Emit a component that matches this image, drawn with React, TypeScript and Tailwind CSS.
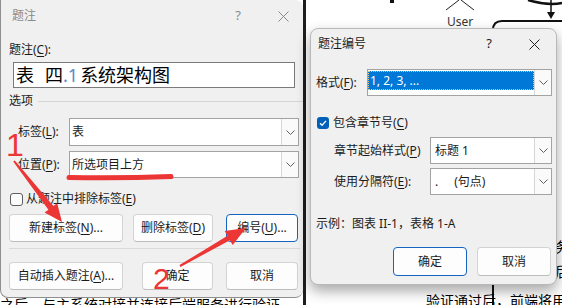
import React from 'react';

const RED = '#ec3535';

function CloseIcon({ color }: { color: string }) {
  return (
    <svg width="11" height="11" viewBox="0 0 11 11">
      <path d="M0.5 0.5 L10.5 10.5 M10.5 0.5 L0.5 10.5" stroke={color} strokeWidth="1" fill="none" />
    </svg>
  );
}

function Chevron() {
  return (
    <svg width="9" height="5" viewBox="0 0 9 5">
      <path d="M0.5 0.5 L4.5 4.5 L8.5 0.5" fill="none" stroke="#606060" strokeWidth="1" />
    </svg>
  );
}

function Combo({ className, children }: { className: string; children: React.ReactNode }) {
  return (
    <div className={`flex border border-[#a3a3a3] bg-white ${className}`}>
      <div className="flex min-w-0 flex-1 items-center">{children}</div>
      <div className="flex w-[17px] items-center justify-center border-l border-[#d6d6d6] bg-[#fafafa]">
        <Chevron />
      </div>
    </div>
  );
}

function Btn({ className, focus, children }: { className: string; focus?: boolean; children: React.ReactNode }) {
  return (
    <div
      className={`flex items-center justify-center rounded-[4px] border bg-[#fdfdfd] ${
        focus ? 'border-[#1565c0]' : 'border-[#d3d3d3] border-b-[#bcbcbc]'
      } ${className}`}
    >
      {children}
    </div>
  );
}

function Key({ k }: { k: string }) {
  return <span className="underline underline-offset-[2px]">{k}</span>;
}

function CaptionDialog() {
  return (
    <div className="absolute left-0 top-0 h-[298px] w-[303px] rounded-b-[8px] rounded-tr-[8px] border-b border-l border-[#8f8f8f] bg-[#f0f0f0]">
      <div className="flex h-[32px] items-center text-[#8a8a8a]">
        <span className="flex-1 pl-[11px]">题注</span>
        <span className="w-[50px] text-center text-[13px]">?</span>
        <span className="flex w-[40px] justify-center">
          <CloseIcon color="#8a8a8a" />
        </span>
      </div>
      <div className="pl-[8px]">
        <div className="mt-[10px] leading-[16px]">
          题注(<Key k="C" />):
        </div>
        <div className="ml-[4px] mt-[4px] flex h-[26px] w-[282px] items-center border border-[#7a7a7a] bg-white pl-[2px] text-[18px] leading-none text-black">
          <span>表</span>
          <span className="ml-[11px]">四</span>
          <span className="text-[#5a8ac6]">.1</span>
          <span className="ml-[2px]">系统架构图</span>
        </div>
        <div className="mt-[5px] flex h-[16px] items-center">
          <span>选项</span>
          <div className="ml-[5px] h-px flex-1 bg-[#d5d5d5]" />
        </div>
        <div className="mt-[9px] flex h-[28px]">
          <div className="flex w-[60px] items-center pl-[9px]">
            标签(<Key k="L" />):
          </div>
          <Combo className="w-[230px]">
            <span className="pl-[2px]">表</span>
          </Combo>
        </div>
        <div className="mt-[5px] flex h-[27px]">
          <div className="flex w-[60px] items-center pl-[9px]">
            位置(<Key k="P" />):
          </div>
          <Combo className="w-[230px]">
            <span className="pl-[2px]">所选项目上方</span>
          </Combo>
        </div>
        <div className="mt-[14px] flex h-[14px] items-center">
          <div className="ml-[1px] h-[13px] w-[13px] rounded-[3px] border border-[#5f5f5f] bg-[#fbfbfb]" />
          <span className="ml-[3px]">
            从题注中排除标签(<Key k="E" />)
          </span>
        </div>
        <div className="mt-[8px] flex h-[28px]">
          <Btn className="w-[114px]">
            新建标签(<Key k="N" />)...
          </Btn>
          <Btn className="ml-[10px] w-[80px]">
            删除标签(<Key k="D" />)
          </Btn>
          <Btn className="ml-[13px] w-[72px]" focus>
            编号(<Key k="U" />)...
          </Btn>
        </div>
        <div className="mt-[6px] h-px w-[291px] bg-[#dadada]" />
        <div className="mt-[13px] flex h-[28px]">
          <Btn className="w-[114px]">
            自动插入题注(<Key k="A" />)...
          </Btn>
          <Btn className="ml-[19px] w-[71px]">确定</Btn>
          <Btn className="ml-[13px] w-[72px]">取消</Btn>
        </div>
      </div>
    </div>
  );
}

function NumberingDialog() {
  return (
    <div className="absolute left-[310px] top-[28px] h-[257px] w-[247px] rounded-[8px] border border-[#b9b9b9] bg-[#f0f0f0] shadow-[0_6px_14px_rgba(0,0,0,0.35)]">
      <div className="flex h-[30px] items-center">
        <span className="flex-1 pl-[7px]">题注编号</span>
        <span className="w-[46px] text-center text-[13px]">?</span>
        <span className="flex w-[44px] justify-center">
          <CloseIcon color="#1f1f1f" />
        </span>
      </div>
      <div className="pl-[5px]">
        <div className="mt-[10px] flex h-[27px]">
          <div className="flex w-[51px] items-center">
            格式(<Key k="F" />):
          </div>
          <Combo className="w-[185px]">
            <div className="mb-auto mt-[1px] flex h-[19px] flex-1 items-center border border-dotted border-[#f3c27a] bg-[#0078d7] pl-[1px] text-white">
              1, 2, 3, ...
            </div>
          </Combo>
        </div>
        <div className="mt-[21px] flex h-[12px] items-center">
          <div className="ml-[1px] flex h-[12px] w-[12px] items-center justify-center rounded-[3px] bg-[#005fb8]">
            <svg width="10" height="10" viewBox="0 0 10 10">
              <path d="M2 5.2 L4.1 7.2 L8 2.9" stroke="white" strokeWidth="1.3" fill="none" />
            </svg>
          </div>
          <span className="ml-[4px]">
            包含章节号(<Key k="C" />)
          </span>
        </div>
        <div className="mt-[8px] flex h-[27px]">
          <div className="flex w-[114px] items-center pl-[18px]">
            章节起始样式(<Key k="P" />)
          </div>
          <Combo className="w-[122px]">
            <span className="pl-[4px]">标题 1</span>
          </Combo>
        </div>
        <div className="mt-[4px] flex h-[27px]">
          <div className="flex w-[114px] items-center pl-[18px]">
            使用分隔符(<Key k="E" />):
          </div>
          <Combo className="w-[122px]">
            <span className="pl-[4px]">.</span>
            <span className="ml-[16px]">(句点)</span>
          </Combo>
        </div>
        <div className="mt-[21px] leading-[16px]">示例：图表 II-1，表格 1-A</div>
        <div className="mt-[15px] flex h-[29px] pl-[77px]">
          <Btn className="w-[74px]" focus>
            确定
          </Btn>
          <Btn className="ml-[10px] w-[74px]">取消</Btn>
        </div>
      </div>
    </div>
  );
}

function DocumentBackdrop() {
  return (
    <>
      <svg className="absolute left-0 top-0" width="562" height="305" viewBox="0 0 562 305">
        <rect x="390" y="0" width="4" height="3" fill="#111" />
        <path d="M459 0 L446 10 M461 0 L474 10" stroke="#222" strokeWidth="1" fill="none" />
        <path d="M528 0 Q548 6 562 3" stroke="#111" strokeWidth="2.5" fill="none" />
        <path d="M551 0 L551 13" stroke="#111" strokeWidth="1.5" />
        <path d="M547 12 L555 12 L551 19 Z" fill="#111" />
        <path d="M493 305 L493 30 Q493 21 502 21 L562 21" stroke="#111" strokeWidth="2" fill="none" />
      </svg>
      <div className="absolute left-[447px] top-[15px] text-[12px] leading-[14px] text-[#333]">User</div>
      <div className="absolute left-0 top-[296px] whitespace-nowrap text-[14px] leading-[18px] text-black">
        之后，与主系统对接并连接后端服务进行验证
      </div>
      <div className="absolute left-[426px] top-[292px] whitespace-nowrap text-[14px] leading-[18px] text-black">
        验证通过后，前端将用户
      </div>
      <div className="absolute left-[555px] top-[238px] text-[14px] leading-[18px] text-black">务</div>
      <div className="absolute left-[555px] top-[263px] text-[14px] leading-[18px] text-black">后</div>
    </>
  );
}

function Annotations() {
  return (
    <>
      <svg className="pointer-events-none absolute left-0 top-0" width="562" height="305" viewBox="0 0 562 305">
        <path d="M69 177.5 Q120 178.5 171 176.5" stroke={RED} strokeWidth="5" strokeLinecap="round" fill="none" />
        <polygon
          points="13.2,161.6 48.4,209.8 44.6,212.6 62,222 57.2,203.2 53.4,206.1 14.8,160.4"
          fill={RED}
        />
        <polygon
          points="180.5,266.9 229.9,240.2 232.7,244.9 246,228 224.7,231.1 227.5,235.8 179.5,265.1"
          fill={RED}
        />
      </svg>
      <div className="pointer-events-none absolute left-[6px] top-[129px] font-['Liberation_Sans',sans-serif] text-[32px] leading-none text-[#ec3535]">
        1
      </div>
      <div className="pointer-events-none absolute left-[153px] top-[264px] font-['Liberation_Sans',sans-serif] text-[30px] leading-none text-[#ec3535]">
        2
      </div>
    </>
  );
}

export default function App() {
  return (
    <div className="relative h-[305px] w-[562px] overflow-hidden bg-white font-['Noto_Sans','Noto_Sans_CJK_SC',sans-serif] text-[12px] text-[#1b1b1b]">
      <DocumentBackdrop />
      <CaptionDialog />
      <div className="absolute left-[303px] top-0 h-[305px] w-[3px] bg-[#1e1e1e]" />
      <NumberingDialog />
      <Annotations />
    </div>
  );
}
